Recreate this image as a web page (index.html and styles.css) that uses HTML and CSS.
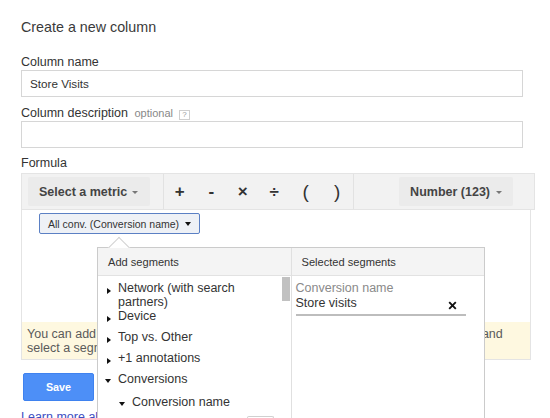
FILE: index.html
```html
<!DOCTYPE html>
<html>
<head>
<meta charset="utf-8">
<link rel="stylesheet" href="styles.css">
</head>
<body>
<div class="page">
  <h1 class="title">Create a new column</h1>

  <div class="label">Column name</div>
  <div class="input field">Store Visits</div>

  <div class="label">Column description <span class="optional">optional</span><span class="help">?</span></div>
  <div class="input field"></div>

  <div class="label label-formula">Formula</div>
  <div class="formula">
    <div class="toolbar">
      <div class="tb-left">
        <div class="tb-btn">Select a metric <span class="caret-gray"></span></div>
      </div>
      <div class="tb-ops">
        <span class="op">+</span>
        <span class="op">-</span>
        <span class="op">×</span>
        <span class="op">÷</span>
        <span class="op paren">(</span>
        <span class="op paren">)</span>
      </div>
      <div class="tb-right">
        <div class="tb-btn">Number (123) <span class="caret-gray"></span></div>
      </div>
    </div>
    <div class="formula-body">
      <div class="chip">All conv. (Conversion name) <span class="caret-black"></span></div>
      <div class="notice">You can add segments to every metric in your formula. Click on the metric's arrow and<br>select a segment to narrow down the data.</div>

      <div class="popup">
        <div class="popup-arrow"></div>
        <div class="popup-col">
          <div class="popup-head">Add segments</div>
          <div class="seg-list">
            <div class="seg closed">Network (with search partners)</div>
            <div class="seg closed">Device</div>
            <div class="seg closed">Top vs. Other</div>
            <div class="seg closed">+1 annotations</div>
            <div class="seg open">Conversions</div>
            <div class="seg open sub">Conversion name</div>
            <div class="seg-box"></div>
            <div class="thumb"></div>
          </div>
        </div>
        <div class="popup-col popup-col-right">
          <div class="popup-head">Selected segments</div>
          <div class="selected">
            <div class="sel-label">Conversion name</div>
            <div class="sel-value">
              <span>Store visits</span>
              <svg class="remove" width="9" height="9" viewBox="0 0 9 9"><path d="M1.2 1.2 L7.8 7.8 M7.8 1.2 L1.2 7.8" stroke="#111" stroke-width="1.9" fill="none"/></svg>
            </div>
          </div>
        </div>
      </div>
    </div>
  </div>

  <button class="save">Save</button>
  <a class="learn" href="#">Learn more about custom columns</a>
</div>
</body>
</html>
```

FILE: styles.css
```css
html {
  overflow: hidden;
}
body {
  margin: 0;
  background: #fff;
  font-family: "Liberation Sans", Arial, sans-serif;
  color: #333;
}
.page {
  padding: 18px 0 0 21px;
}
.title {
  margin: 0 0 19px;
  font-size: 14.3px;
  line-height: 18px;
  font-weight: normal;
  color: #3a3a3a;
}
.label {
  font-size: 12.5px;
  line-height: 15px;
  color: #333;
}
.label-formula {
  margin-bottom: 2px;
}
.optional {
  font-size: 11px;
  color: #888;
  margin-left: 3px;
}
.help {
  display: inline-block;
  box-sizing: border-box;
  width: 11px;
  height: 10px;
  margin-left: 6px;
  border: 1px solid #cfcfcf;
  font-size: 8px;
  line-height: 8px;
  text-align: center;
  color: #999;
  vertical-align: 0px;
}
.input {
  box-sizing: border-box;
  width: 502px;
  height: 27px;
  border: 1px solid #d6d6d6;
  padding: 0 8px;
  display: flex;
  align-items: center;
  font-size: 11.7px;
  color: #333;
}
.field {
  margin-bottom: 9px;
}
.field + .label-formula {
  margin-top: -1px;
}

/* formula */
.formula {
  width: 514px;
}
.toolbar {
  box-sizing: border-box;
  height: 37px;
  border: 1px solid #e4e4e4;
  background: #f2f2f2;
  display: flex;
}
.tb-left {
  width: 142px;
  border-right: 1px solid #e2e2e2;
  display: flex;
  align-items: center;
  padding-left: 6px;
  box-sizing: border-box;
}
.tb-btn {
  height: 29px;
  padding: 0 12px 0 11px;
  background: #ebebeb;
  border-radius: 2px;
  display: flex;
  align-items: center;
  gap: 5px;
  font-size: 12.5px;
  font-weight: bold;
  color: #444;
  white-space: nowrap;
}
.tb-right .tb-btn {
  padding: 0 11px 0 11px;
  gap: 6px;
}
.caret-gray {
  width: 0;
  height: 0;
  border-left: 3px solid transparent;
  border-right: 3px solid transparent;
  border-top: 3px solid #777;
  margin-top: 1px;
}
.tb-ops {
  width: 189px;
  display: flex;
  align-items: center;
}
.op {
  width: 31.5px;
  text-align: center;
  font-size: 17px;
  font-weight: bold;
  color: #333;
  line-height: 20px;
}
.op.paren {
  font-weight: normal;
  font-size: 19px;
}
.tb-right {
  flex: 1;
  border-left: 1px solid #e2e2e2;
  display: flex;
  align-items: center;
  justify-content: flex-end;
  padding-right: 21px;
}
.formula-body {
  position: relative;
  box-sizing: border-box;
  width: 510px;
  height: 150px;
  border: 1px solid #e4e4e4;
  border-top: none;
  display: flex;
  flex-direction: column;
  align-items: flex-start;
}
.chip {
  box-sizing: border-box;
  height: 21px;
  margin: 3px 0 0 17px;
  padding: 0 8px 0 8px;
  border: 1px solid #5b80c4;
  border-radius: 2px;
  background: #eef1f6;
  display: flex;
  align-items: center;
  gap: 6px;
  font-size: 10.5px;
  color: #333;
  white-space: nowrap;
}
.caret-black {
  width: 0;
  height: 0;
  border-left: 3.5px solid transparent;
  border-right: 3.5px solid transparent;
  border-top: 4px solid #111;
}
.notice {
  margin-top: auto;
  align-self: stretch;
  background: #fef8e0;
  padding: 5px 5px 4px 5px;
  font-size: 12.5px;
  line-height: 14px;
  color: #5a5a5a;
  white-space: nowrap;
  overflow: hidden;
}

/* popup */
.popup {
  position: absolute;
  left: 75px;
  top: 37px;
  width: 388px;
  height: 190px;
  box-sizing: border-box;
  border: 1px solid #cbcbcb;
  background: #fff;
  display: flex;
}
.popup-arrow {
  position: absolute;
  left: 13px;
  top: -8px;
  width: 15px;
  height: 15px;
  background: #fff;
  border-top: 1px solid #d2d2d2;
  border-left: 1px solid #d2d2d2;
  transform: rotate(45deg);
}
.popup-col {
  width: 193px;
  position: relative;
  z-index: 1;
}
.popup-col-right {
  width: 193px;
  border-left: 1px solid #e0e0e0;
}
.popup-head {
  box-sizing: border-box;
  height: 28px;
  background: #f4f4f4;
  border-bottom: 1px solid #e2e2e2;
  padding-left: 10px;
  display: flex;
  align-items: center;
  font-size: 11.1px;
  color: #333;
}
.seg-list {
  position: relative;
  padding-top: 5px;
}
.seg {
  position: relative;
  min-height: 21px;
  padding-left: 20px;
  padding-right: 24px;
  font-size: 12.5px;
  line-height: 14px;
  color: #333;
}
.seg.closed::before {
  content: "";
  position: absolute;
  left: 9px;
  top: 7px;
  border-top: 3px solid transparent;
  border-bottom: 3px solid transparent;
  border-left: 4px solid #111;
}
.seg.open::before {
  content: "";
  position: absolute;
  left: 7px;
  top: 7px;
  border-left: 3.5px solid transparent;
  border-right: 3.5px solid transparent;
  border-top: 4px solid #111;
}
.seg.sub {
  margin-top: 2px;
  padding-left: 34px;
}
.seg.sub::before {
  left: 21px;
}
.seg-box {
  margin-left: 149px;
  width: 25px;
  height: 10px;
  border: 1px solid #d0d0d0;
  border-bottom: none;
  border-radius: 2px 2px 0 0;
}
.thumb {
  position: absolute;
  right: 1px;
  top: 1px;
  width: 8px;
  height: 24px;
  background: #c1c1c1;
}
.selected {
  padding: 5px 0 0 4px;
}
.sel-label {
  font-size: 12.5px;
  line-height: 15px;
  color: #8a8a8a;
}
.sel-value {
  width: 170px;
  box-sizing: border-box;
  display: flex;
  align-items: center;
  justify-content: space-between;
  padding: 0 9px 3px 0;
  border-bottom: 2px solid #bdbdbd;
  font-size: 12.5px;
  line-height: 15px;
  color: #333;
}
.remove {
  margin-top: 3px;
}

/* bottom */
.save {
  display: block;
  box-sizing: border-box;
  width: 71px;
  height: 28px;
  margin: 13px 0 0 2px;
  border: 1px solid #3f82ef;
  border-radius: 2px;
  background: #4d8ff7;
  color: #fff;
  font-family: "Liberation Sans", Arial, sans-serif;
  font-size: 10.8px;
  font-weight: bold;
  padding: 0;
}
.learn {
  display: block;
  margin-top: 9px;
  font-size: 12.5px;
  line-height: 15px;
  color: #3d4ec2;
  text-decoration: none;
}
```
